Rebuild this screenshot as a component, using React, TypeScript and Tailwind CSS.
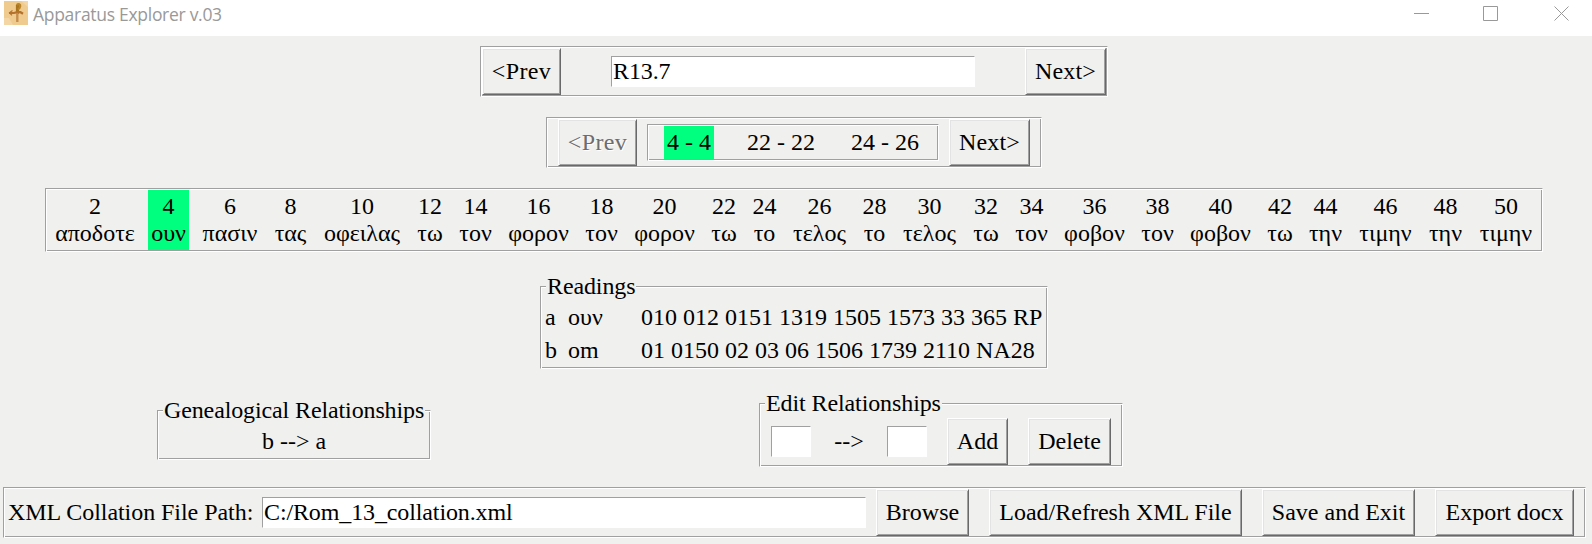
import type { ReactNode } from "react";

const GROOVE =
  "border border-t-[#a0a0a0] border-l-[#a0a0a0] border-r-white border-b-white p-px shadow-[inset_1px_1px_#fff,inset_-1px_-1px_#a0a0a0]";

function Groove({ className, children }: { className: string; children: ReactNode }) {
  return <div className={`${GROOVE} ${className}`}>{children}</div>;
}

function LabelFrame({
  title,
  titleClass,
  className,
  children,
}: {
  title: string;
  titleClass: string;
  className: string;
  children: ReactNode;
}) {
  return (
    <section className={`relative ${GROOVE} ${className}`}>
      <h2
        className={`absolute left-[5px] -top-[14px] h-[27px] bg-[#f0f0ee] pl-px leading-[27px] whitespace-nowrap ${titleClass}`}
      >
        {title}
      </h2>
      {children}
    </section>
  );
}

function Button({
  className,
  disabled = false,
  children,
}: {
  className: string;
  disabled?: boolean;
  children: ReactNode;
}) {
  return (
    <button
      disabled={disabled}
      className={`flex h-[47px] shrink-0 items-center justify-center border border-t-white border-l-white border-r-[#696969] border-b-[#696969] pb-px leading-[27px] whitespace-nowrap shadow-[inset_1px_1px_#e3e3e3,inset_-1px_-1px_#a0a0a0] ${
        disabled ? "text-[#6d6d6d] [text-shadow:1px_1px_#fff]" : ""
      } ${className}`}
    >
      {children}
    </button>
  );
}

function Entry({ className, value = "" }: { className: string; value?: string }) {
  return (
    <input
      readOnly
      value={value}
      className={`h-[31px] shrink-0 border border-t-[#a0a0a0] border-l-[#a0a0a0] border-r-white border-b-white bg-white pl-px leading-[27px] tracking-[-0.12px] outline-none ${className}`}
    />
  );
}

const words = [
  { n: 2, t: "αποδοτε", w: "w-[86px]" },
  { n: 4, t: "ουν", w: "w-[41px]" },
  { n: 6, t: "πασιν", w: "w-[62px]" },
  { n: 8, t: "τας", w: "w-[39px]" },
  { n: 10, t: "οφειλας", w: "w-[84px]" },
  { n: 12, t: "τω", w: "w-[32px]" },
  { n: 14, t: "τον", w: "w-[39px]" },
  { n: 16, t: "φορον", w: "w-[67px]" },
  { n: 18, t: "τον", w: "w-[39px]" },
  { n: 20, t: "φορον", w: "w-[67px]" },
  { n: 22, t: "τω", w: "w-[32px]" },
  { n: 24, t: "το", w: "w-[29px]" },
  { n: 26, t: "τελος", w: "w-[61px]" },
  { n: 28, t: "το", w: "w-[29px]" },
  { n: 30, t: "τελος", w: "w-[61px]" },
  { n: 32, t: "τω", w: "w-[32px]" },
  { n: 34, t: "τον", w: "w-[39px]" },
  { n: 36, t: "φοβον", w: "w-[67px]" },
  { n: 38, t: "τον", w: "w-[39px]" },
  { n: 40, t: "φοβον", w: "w-[67px]" },
  { n: 42, t: "τω", w: "w-[32px]" },
  { n: 44, t: "την", w: "w-[39px]" },
  { n: 46, t: "τιμην", w: "w-[61px]" },
  { n: 48, t: "την", w: "w-[39px]" },
  { n: 50, t: "τιμην", w: "w-[62px]" },
];

function TitleBar() {
  return (
    <header className="flex h-9 bg-white pl-1">
      <svg width="24" height="24" viewBox="0 0 24 24" className="mt-px">
        <rect width="24" height="24" fill="#efcb90" />
        <path d="M0 17h5l4 7H0zM17 0h7v6z" fill="#f3d6a4" />
        <path d="M13.500 13V4" stroke="#a87420" strokeWidth="3.200" fill="none" />
        <path d="M12.600 4c2-1.800 4-.6 3.600 1.400-.2 1.600-1.200 2.400-2.400 2.800" stroke="#b98328" strokeWidth="2.200" fill="none" />
        <path d="M5 12h5l3-.8h3.500l2.500 1.600" stroke="#b5722c" strokeWidth="2.200" fill="none" />
        <path d="M8.500 9.500l-3 2.300 2.500 2.500" stroke="#b5722c" strokeWidth="1.200" fill="none" />
        <path d="M13.300 12v9" stroke="#c48d4c" strokeWidth="2.400" fill="none" />
      </svg>
      <h1 className="ml-[5px] w-[190px] pt-[2px] font-['Open_Sans',sans-serif] text-[17.5px] leading-[25px] tracking-[-0.29px] whitespace-nowrap text-[#999]">
        Apparatus Explorer v.03
      </h1>
      <svg
        width="156"
        height="16"
        viewBox="0 0 156 16"
        fill="none"
        stroke="#999"
        className="mt-[6px] mr-[22px] ml-auto"
      >
        <path d="M0 7.500h15M69.500.5h14v14h-14z" />
        <path d="M140.500.5l14 14M154.500.5l-14 14" />
      </svg>
    </header>
  );
}

export default function App() {
  return (
    <div className="h-[544px] w-[1592px] overflow-hidden bg-[#f0f0ee] font-['Liberation_Serif',serif] text-[24px] text-black">
      <TitleBar />
      <main className="flex w-[1588px] flex-col items-center">
        <Groove className="mt-[10px] flex h-[51px] w-[628px] items-center">
          <Button className="w-[79px] tracking-[0.4px]">&lt;Prev</Button>
          <Entry className="ml-[50px] w-[364px]" value="R13.7" />
          <Button className="ml-[50px] w-[81px] tracking-[0.2px]">Next&gt;</Button>
        </Groove>

        <Groove className="mt-5 flex h-[51px] w-[496px] items-center px-[11px]">
          <Button className="w-[79px] tracking-[0.4px]" disabled>
            &lt;Prev
          </Button>
          <Groove className="mx-[10px] flex h-[37px] w-[292px] shrink-0 justify-between px-4 text-center leading-[33px]">
            <span className="w-[50px] bg-[#00ff7f]">4 - 4</span>
            <span className="w-[74px]">22 - 22</span>
            <span className="w-[74px]">24 - 26</span>
          </Groove>
          <Button className="w-[81px] tracking-[0.2px]">Next&gt;</Button>
        </Groove>

        <Groove className="mt-5 flex h-[64px] w-[1498px] gap-[10px] px-[6px]">
          {words.map(({ n, t, w }) => (
            <div
              key={n}
              className={`flex shrink-0 flex-col items-center pt-[3px] leading-[27px] ${w} ${n === 4 ? "bg-[#00ff7f]" : ""}`}
            >
              <span>{n}</span>
              <span>{t}</span>
            </div>
          ))}
        </Groove>

        <LabelFrame
          title="Readings"
          titleClass="w-[90px] tracking-[-0.12px]"
          className="mt-[34px] h-[83px] w-[508px]"
        >
          <div className="grid grid-cols-[23px_73px_auto] pt-[13px] pl-[3px] leading-[33px] whitespace-nowrap">
            <span>a</span>
            <span>ουν</span>
            <span>010 012 0151 1319 1505 1573 33 365 RP</span>
            <span>b</span>
            <span>om</span>
            <span>01 0150 02 03 06 1506 1739 2110 NA28</span>
          </div>
        </LabelFrame>

        <div className="mt-[34px] flex h-[64px] items-start self-stretch pl-[157px]">
          <LabelFrame
            title="Genealogical Relationships"
            titleClass="w-[262px] tracking-[-0.12px]"
            className="mt-[7px] h-[50px] w-[274px]"
          >
            <p className="pt-[13px] text-center leading-[33px]">b --&gt; a</p>
          </LabelFrame>
          <LabelFrame
            title="Edit Relationships"
            titleClass="w-[177px] tracking-[-0.1px]"
            className="ml-[328px] h-[64px] w-[364px]"
          >
            <div className="flex items-center pt-[13px] pl-[10px]">
              <Entry className="w-[40px]" />
              <span className="w-[76px] text-center leading-[33px]">--&gt;</span>
              <Entry className="w-[40px]" />
              <Button className="ml-5 w-[61px]">Add</Button>
              <Button className="ml-5 w-[83px]">Delete</Button>
            </div>
          </LabelFrame>
        </div>

        <Groove className="mt-5 ml-[3px] flex h-[51px] w-[1583px] items-center self-start">
          <label className="w-[257px] pl-[3px] leading-[33px] tracking-[-0.05px] whitespace-nowrap">
            XML Collation File Path:
          </label>
          <Entry className="w-[604px]" value="C:/Rom_13_collation.xml" />
          <Button className="ml-[10px] w-[93px]">Browse</Button>
          <Button className="ml-5 w-[253px]">Load/Refresh XML File</Button>
          <Button className="ml-5 w-[153px]">Save and Exit</Button>
          <Button className="ml-5 w-[139px]">Export docx</Button>
        </Groove>
      </main>
    </div>
  );
}
